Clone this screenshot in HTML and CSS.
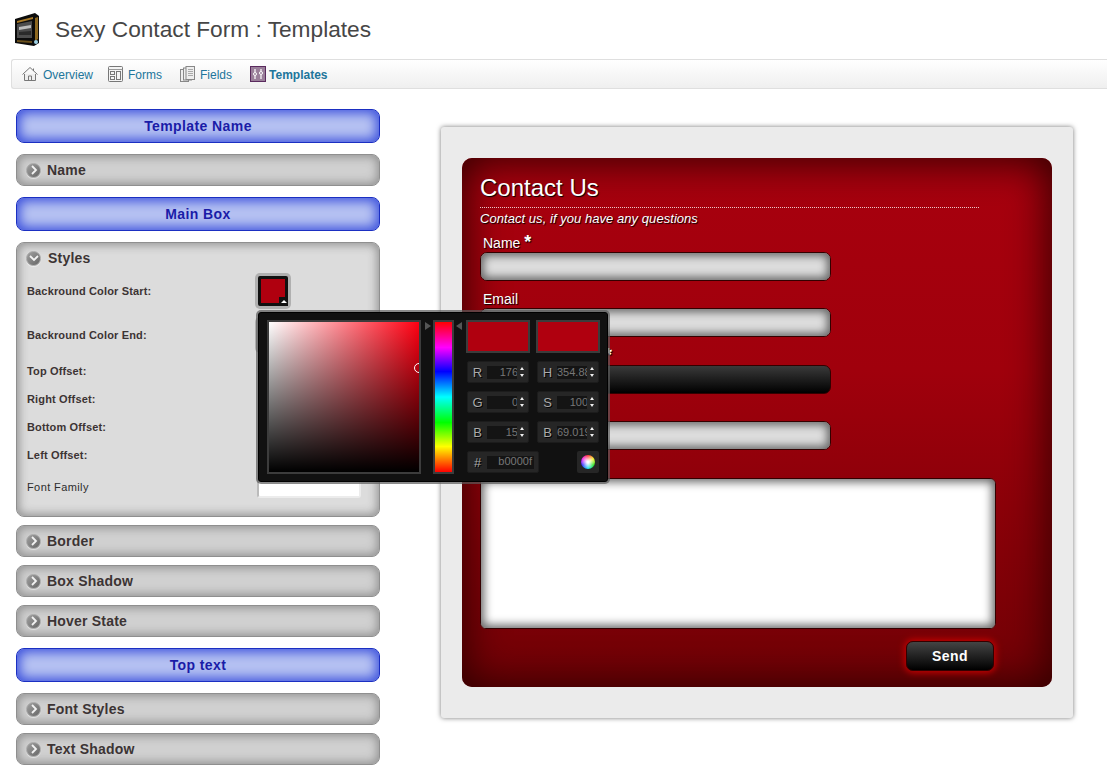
FILE: index.html
```html
<!DOCTYPE html>
<html>
<head>
    <title>Sexy Contact Form : Templates</title>
    <link rel="stylesheet" href="styles.css">
</head>
<body>
    <div class="page-title">
        <svg class="logo" width="26" height="34" viewBox="0 0 26 34">
            <polygon points="1,6 21,0 25,3 25,30 20,33 1,30" fill="#0c0c0c"/>
            <polygon points="3,8 19,4 19,6 3,10" fill="#a87a28"/>
            <polygon points="3,11 18,8 18,25 3,25" fill="#4c4c4c"/>
            <polygon points="5,14 17,12 17,15 5,17" fill="#bdbdbd"/>
            <polygon points="5,19 17,18 17,22 5,22" fill="#2a2a2a"/>
            <polygon points="21,5 24,4 24,26 21,28" fill="#8e6820"/>
            <polygon points="3,27 18,28 18,30 3,29" fill="#6a501c"/>
            <circle cx="22" cy="29" r="2" fill="#9fd2e6"/>
        </svg>
        <h1>Sexy Contact Form : Templates</h1>
    </div>

    <div class="nav">
        <a class="nav-item" href="#">
            <svg width="16" height="16" viewBox="0 0 16 16" fill="none" stroke="#777">
                <path d="M0.5 8.5 L8 1.5 L15.5 8.5"/>
                <path d="M11.5 2.5 V5"/>
                <path d="M2.5 8 V14.5 H13.5 V8" fill="#eee"/>
                <path d="M6.5 14.5 V10 H9.5 V14.5"/>
            </svg>
            <span>Overview</span>
        </a>
        <a class="nav-item" href="#">
            <svg width="15" height="16" viewBox="0 0 15 16" fill="none" stroke="#777">
                <rect x="0.5" y="0.5" width="14" height="15" rx="1" fill="#f4f4f4"/>
                <path d="M0.5 3.5 H14.5" stroke="#999"/>
                <rect x="2.5" y="5.5" width="4" height="3"/>
                <rect x="2.5" y="10.5" width="4" height="3"/>
                <rect x="8.5" y="5.5" width="4" height="8"/>
            </svg>
            <span>Forms</span>
        </a>
        <a class="nav-item" href="#">
            <svg width="18" height="16" viewBox="-4 0 18 16" fill="#eee" stroke="#888">
                <rect x="-0.5" y="3.5" width="8" height="12"/>
                <rect x="2.5" y="2" width="8" height="12"/>
                <rect x="5" y="0.5" width="8.5" height="13"/>
                <path d="M7 3.5 H12 M7 5.5 H12 M7 7.5 H12 M7 9.5 H12" stroke="#aaa"/>
            </svg>
            <span>Fields</span>
        </a>
        <a class="nav-item nav-active" href="#">
            <svg width="19" height="16" viewBox="-3 0 19 16" fill="none" stroke="#fff">
                <rect x="0.5" y="0.5" width="15" height="15" fill="#9a7f9a" stroke="#5a2a5e"/>
                <path d="M5 3 V6 M5 10 V13 M11 3 V5 M11 9 V13" stroke-width="1.2"/>
                <circle cx="5" cy="8" r="1.5"/>
                <circle cx="11" cy="7" r="1.5"/>
            </svg>
            <span>Templates</span>
        </a>
    </div>

    <div class="content">
        <div class="sidebar">
            <div class="group-title">Template Name</div>
            <div class="section">
                <div class="section-head"><span class="toggle"><svg width="8" height="10" viewBox="0 0 8 10"><path d="M2 1 L6 5 L2 9" /></svg></span>Name</div>
            </div>

            <div class="group-title">Main Box</div>
            <div class="section section-open">
                <div class="section-head"><span class="toggle"><svg width="10" height="8" viewBox="0 0 10 8"><path d="M1 2 L5 6 L9 2" /></svg></span>Styles</div>
                <div class="option-row row-color">
                    <span class="option-label">Backround Color Start:</span>
                    <span class="swatch"><span class="swatch-arrow"></span></span>
                </div>
                <div class="option-row row-color">
                    <span class="option-label">Backround Color End:</span>
                    <span class="swatch"><span class="swatch-arrow"></span></span>
                </div>
                <div class="option-row"><span class="option-label">Top Offset:</span></div>
                <div class="option-row"><span class="option-label">Right Offset:</span></div>
                <div class="option-row"><span class="option-label">Bottom Offset:</span></div>
                <div class="option-row"><span class="option-label">Left Offset:</span></div>
                <div class="option-row row-font">
                    <span class="option-label label-plain">Font Family</span>
                    <span class="font-select"></span>
                </div>
            </div>
            <div class="section">
                <div class="section-head"><span class="toggle"><svg width="8" height="10" viewBox="0 0 8 10"><path d="M2 1 L6 5 L2 9" /></svg></span>Border</div>
            </div>
            <div class="section">
                <div class="section-head"><span class="toggle"><svg width="8" height="10" viewBox="0 0 8 10"><path d="M2 1 L6 5 L2 9" /></svg></span>Box Shadow</div>
            </div>
            <div class="section">
                <div class="section-head"><span class="toggle"><svg width="8" height="10" viewBox="0 0 8 10"><path d="M2 1 L6 5 L2 9" /></svg></span>Hover State</div>
            </div>

            <div class="group-title">Top text</div>
            <div class="section">
                <div class="section-head"><span class="toggle"><svg width="8" height="10" viewBox="0 0 8 10"><path d="M2 1 L6 5 L2 9" /></svg></span>Font Styles</div>
            </div>
            <div class="section">
                <div class="section-head"><span class="toggle"><svg width="8" height="10" viewBox="0 0 8 10"><path d="M2 1 L6 5 L2 9" /></svg></span>Text Shadow</div>
            </div>
        </div>

        <div class="preview">
            <div class="form-box">
                <h2 class="form-title">Contact Us</h2>
                <p class="form-sub">Contact us, if you have any questions</p>
                <div class="field field-first">
                    <label>Name <span class="star">*</span></label>
                    <input type="text">
                </div>
                <div class="field">
                    <label>Email</label>
                    <input type="text">
                </div>
                <div class="field field-dark">
                    <label><span class="star star-far">*</span></label>
                    <input type="text">
                </div>
                <div class="field">
                    <label></label>
                    <input type="text">
                </div>
                <textarea class="message"></textarea>
                <div class="form-actions">
                    <button class="send" type="button">Send</button>
                </div>
            </div>
        </div>
    </div>

    <div class="picker">
        <div class="picker-map"></div>
        <div class="picker-hue"></div>
        <div class="picker-side">
            <div class="picker-swatches">
                <div class="picker-color"></div>
                <div class="picker-color"></div>
            </div>
            <div class="picker-fields">
                <div class="pf"><span class="pf-name">R</span><span class="pf-val"><span>176</span></span><span class="pf-spin"></span></div>
                <div class="pf"><span class="pf-name">H</span><span class="pf-val"><span>354.8864</span></span><span class="pf-spin"></span></div>
                <div class="pf"><span class="pf-name">G</span><span class="pf-val"><span>0</span></span><span class="pf-spin"></span></div>
                <div class="pf"><span class="pf-name">S</span><span class="pf-val"><span>100</span></span><span class="pf-spin"></span></div>
                <div class="pf"><span class="pf-name">B</span><span class="pf-val"><span>15</span></span><span class="pf-spin"></span></div>
                <div class="pf"><span class="pf-name">B</span><span class="pf-val"><span>69.0196</span></span><span class="pf-spin"></span></div>
            </div>
            <div class="picker-bottom">
                <div class="pf pf-hex"><span class="pf-name">#</span><span class="pf-val"><span>b0000f</span></span></div>
                <div class="pf-wheel"><span class="wheel"></span></div>
            </div>
        </div>
    </div>
</body>
</html>
```

FILE: styles.css
```css
html, body {
    height: 100%;
}
body {
    font-family: "Liberation Sans", Arial, sans-serif;
    background: #fff;
    margin: 0;
    padding: 0;
    overflow: hidden;
    position: relative;
}

/* header */
.page-title {
    display: flex;
    align-items: center;
    height: 59px;
    padding-left: 14px;
}
.logo {
    margin-right: 15px;
}
.page-title h1 {
    margin: 0;
    font-size: 22.7px;
    font-weight: normal;
    color: #464646;
}
.nav {
    display: flex;
    align-items: center;
    height: 30px;
    box-sizing: border-box;
    margin-left: 11px;
    padding-left: 10px;
    border: 1px solid #dfdfdf;
    border-right: none;
    border-radius: 3px 0 0 3px;
    background: linear-gradient(#fff, #efefef);
}
.nav-item {
    display: flex;
    align-items: center;
    gap: 5px;
    margin-right: 15px;
    font-size: 12px;
    color: #21759b;
    text-decoration: none;
}
.nav-item span {
    margin-top: 2px;
}
.nav-active {
    gap: 3px;
    font-weight: bold;
}

/* left column */
.content {
    display: flex;
    padding: 20px 0 0 16px;
}
.sidebar {
    width: 364px;
    flex: none;
}
.group-title {
    height: 34px;
    box-sizing: border-box;
    margin: 0 0 11px;
    border: 1px solid #1b2fc2;
    border-radius: 8px;
    background: #b6c2f2;
    box-shadow: inset 0 0 12px 3px #3a4fdc;
    color: #1a1ca8;
    font-size: 14px;
    font-weight: bold;
    line-height: 32px;
    text-align: center;
    letter-spacing: 0.4px;
}
.section {
    margin-bottom: 8px;
    border: 1px solid #8f8f8f;
    border-radius: 8px;
    background: #d0d0d0;
    box-shadow: inset 0 0 10px 2px #929292;
}
.section + .group-title {
    margin-top: 11px;
}
.section-head {
    display: flex;
    align-items: center;
    gap: 6px;
    height: 30px;
    padding-left: 9px;
    color: #3c3434;
    font-size: 14px;
    font-weight: bold;
    letter-spacing: 0.2px;
}
.section-open {
    background: #dcdcdc;
    padding-bottom: 11px;
}
.section-open .section-head {
    height: 26px;
    box-sizing: border-box;
    padding-top: 4px;
    gap: 7px;
}
.toggle {
    display: flex;
    align-items: center;
    justify-content: center;
    width: 15px;
    height: 15px;
    border-radius: 50%;
    background: linear-gradient(135deg, #a0a0a0, #666);
    border: 1px solid #a8a8a8;
    box-sizing: border-box;
    box-shadow: 0 1px 1px rgba(255,255,255,0.5);
}
.toggle svg {
    fill: none;
    stroke: #f2f2f2;
    stroke-width: 1.8;
}
.option-row {
    display: flex;
    align-items: center;
    height: 28px;
    padding-left: 10px;
}
.row-color {
    height: 44px;
}
.row-font {
    height: 36px;
}
.option-label {
    width: 231px;
    color: #3c3434;
    font-size: 11px;
    font-weight: bold;
    letter-spacing: 0.15px;
}
.label-plain {
    color: #2c2c2c;
    font-weight: normal;
    letter-spacing: 0.4px;
}
.swatch {
    position: relative;
    width: 24px;
    height: 24px;
    background: #b0000f;
    border: 3px solid #111;
    box-shadow: 0 0 0 3px #b0b0b0;
    border-radius: 2px;
}
.swatch-arrow {
    position: absolute;
    right: -3px;
    bottom: -3px;
    width: 9px;
    height: 9px;
    background: #111;
}
.swatch-arrow::after {
    content: "";
    position: absolute;
    left: 2px;
    top: 3px;
    border: 3px solid transparent;
    border-top: none;
    border-bottom: 3px solid #fff;
}
.font-select {
    width: 100px;
    height: 16px;
    margin: 2px 0 0 -1px;
    background: #fff;
    border: 2px solid #ececec;
    border-left: 2px solid #bbb;
    border-radius: 3px;
}

/* preview */
.preview {
    width: 632px;
    height: 591px;
    flex: none;
    box-sizing: border-box;
    margin: 18px 0 0 61px;
    padding: 31px 21px;
    background: #ebebeb;
    border-radius: 3px;
    box-shadow: 0 0 5px #777;
}
.form-box {
    height: 529px;
    box-sizing: border-box;
    padding: 17px 0 0 18px;
    border-radius: 10px;
    background: linear-gradient(#a8000e, #a0000c 40%, #700005);
    box-shadow: inset 0 0 40px 3px #300000;
    color: #fff;
    text-shadow: 1px 1px 1px #000;
}
.form-title {
    width: 499px;
    height: 32px;
    margin: 0;
    border-bottom: 1px dotted #e8c8c8;
    font-size: 24px;
    font-weight: normal;
    line-height: 25px;
}
.form-sub {
    margin: 3px 0 0;
    font-size: 13px;
    font-style: italic;
    line-height: 16px;
    letter-spacing: 0.05px;
}
.field label {
    display: block;
    height: 27px;
    box-sizing: border-box;
    padding: 10px 0 0 3px;
    font-size: 14px;
    line-height: 16px;
}
.field-first label {
    height: 25px;
    padding-top: 8px;
}
.star {
    font-size: 18px;
    font-weight: bold;
    line-height: 0;
}
.star-far {
    margin-left: 122px;
}
.field input {
    display: block;
    width: 351px;
    height: 29px;
    box-sizing: border-box;
    border: 1px solid #300;
    border-radius: 7px;
    background: #ddd;
    box-shadow: inset 0 0 8px 3px #666;
}
.field-dark {
    margin-top: 1px;
}
.field-dark input {
    background: linear-gradient(#3a3a3a, #000);
    box-shadow: none;
}
.message {
    display: block;
    width: 516px;
    height: 151px;
    box-sizing: border-box;
    margin: 28px 0 0;
    border: 1px solid #300;
    border-radius: 6px;
    background: #fff;
    box-shadow: inset 0 0 10px 3px #666;
    resize: none;
}
.form-actions {
    display: flex;
    justify-content: flex-end;
    width: 514px;
    margin-top: 12px;
}
.send {
    width: 88px;
    height: 30px;
    padding: 0;
    border: 1px solid #300;
    border-radius: 7px;
    background: linear-gradient(#444, #000);
    box-shadow: 0 0 6px 2px #c00000;
    color: #fff;
    font-family: "Liberation Sans", Arial, sans-serif;
    font-size: 14px;
    font-weight: bold;
    letter-spacing: 0.4px;
}

/* colour picker popup */
.picker {
    position: absolute;
    left: 258px;
    top: 312px;
    display: flex;
    width: 350px;
    height: 170px;
    box-sizing: border-box;
    padding: 7px 8px 7px 8px;
    background: #111;
    border: 1px solid #000;
    border-radius: 3px;
    box-shadow: 0 0 0 2px rgba(90,90,90,0.7);
}
.picker-map {
    width: 150px;
    height: 150px;
    flex: none;
    border: 2px solid #3c3c3c;
    background:
        linear-gradient(to top, #000, rgba(0,0,0,0)),
        linear-gradient(to right, #fff, #ff0012);
    position: relative;
}
.picker-map::after {
    content: "";
    position: absolute;
    right: -5px;
    top: 41px;
    width: 8px;
    height: 8px;
    border: 1px solid #fff;
    border-radius: 50%;
    clip-path: inset(0 5px 0 0);
}
.picker-hue {
    position: relative;
    width: 17px;
    height: 150px;
    flex: none;
    margin: 0 12px;
    border: 2px solid #3c3c3c;
    background: linear-gradient(#ff0000, #ff00ff 17%, #0000ff 33%, #00ffff 50%, #00ff00 67%, #ffff00 83%, #ff0000);
}
.picker-hue::before,
.picker-hue::after {
    content: "";
    position: absolute;
    top: 0;
    border: 4px solid transparent;
}
.picker-hue::before {
    left: -10px;
    border-left: 6px solid #555;
    border-right: none;
}
.picker-hue::after {
    right: -10px;
    border-right: 6px solid #555;
    border-left: none;
}
.picker-side {
    display: flex;
    flex-direction: column;
    width: 134px;
}
.picker-swatches {
    display: flex;
    gap: 6px;
}
.picker-color {
    width: 64px;
    height: 33px;
    box-sizing: border-box;
    border: 2px solid #3c3c3c;
    background: #b0000f;
}
.picker-fields {
    display: grid;
    grid-template-columns: 62px 62px;
    column-gap: 8px;
    row-gap: 8px;
    margin: 8px 0;
    padding-left: 1px;
}
.pf {
    display: flex;
    align-items: center;
    height: 22px;
    box-sizing: border-box;
    background: #262626;
    border: 1px solid #1c1c1c;
    border-radius: 2px;
}
.pf-name {
    width: 19px;
    flex: none;
    color: #aaa;
    font-size: 13px;
    text-align: center;
    text-shadow: 1px 1px 0 #000;
}
.pf-val {
    width: 30px;
    height: 13px;
    flex: none;
    overflow: hidden;
    background: #141414;
    color: #777;
    font-size: 11px;
    line-height: 13px;
}
.pf-val span {
    display: block;
    margin-right: -1px;
    white-space: nowrap;
    text-align: right;
}
.pf-spin {
    position: relative;
    width: 10px;
    height: 14px;
}
.pf-spin::before,
.pf-spin::after {
    content: "";
    position: absolute;
    left: 3px;
    border: 2px solid transparent;
}
.pf-spin::before {
    top: 2px;
    border-top: none;
    border-bottom: 3px solid #eee;
}
.pf-spin::after {
    bottom: 2px;
    border-bottom: none;
    border-top: 3px solid #eee;
}
.picker-bottom {
    display: flex;
    justify-content: space-between;
    padding-left: 1px;
}
.pf-hex {
    width: 72px;
}
.pf-hex .pf-val {
    width: 47px;
    line-height: 11px;
}
.pf-hex .pf-val span {
    margin-right: 0;
    padding-right: 2px;
}
.pf-wheel {
    display: flex;
    align-items: center;
    justify-content: center;
    width: 22px;
    height: 22px;
    margin-right: 1px;
    background: #262626;
    border-radius: 2px;
}
.wheel {
    width: 14px;
    height: 14px;
    border-radius: 50%;
    background:
        radial-gradient(circle, #fff 10%, rgba(255,255,255,0) 70%),
        conic-gradient(#ff3030, #f0f020, #20e020, #20e0f0, #3030ff, #f020f0, #ff3030);
}
```
